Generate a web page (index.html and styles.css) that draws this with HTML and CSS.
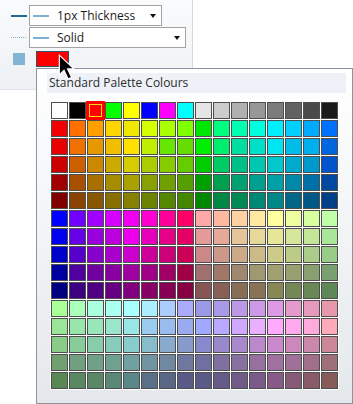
FILE: index.html
```html
<!DOCTYPE html>
<html lang="en">
<head>
    <meta charset="UTF-8">
    <title>Line Style Picker</title>
    <link rel="stylesheet" href="styles.css">
</head>
<body>
    <div class="style-panel">
        <!-- Thickness row -->
        <div class="style-row">
            <span class="line-icon thick"></span>
            <div class="combo combo-short">
                <span class="combo-line"></span>
                <span class="combo-text">1px Thickness</span>
                <span class="combo-arrow"></span>
            </div>
        </div>

        <!-- Dash style row -->
        <div class="style-row">
            <span class="line-icon dotted"></span>
            <div class="combo combo-long">
                <span class="combo-line"></span>
                <span class="combo-text">Solid</span>
                <span class="combo-arrow"></span>
            </div>
        </div>

        <!-- Colour row -->
        <div class="style-row colour-row">
            <span class="fill-icon"></span>
            <button class="colour-button"></button>
        </div>
    </div>

    <!-- Palette popup -->
    <div class="palette-popup">
        <div class="palette-header">Standard Palette Colours</div>
        <div class="palette-body">
            <div id="paletteGrid" class="palette-grid"></div>
        </div>
    </div>

    <svg class="cursor" width="19" height="28" viewBox="0 0 16 24">
        <path d="M1 1 L1 18 L5 14 L8.5 21.5 L11.5 20 L8 12.8 L13.5 12.8 Z" fill="#000" stroke="#fff" stroke-width="1" stroke-linejoin="miter"/>
    </svg>

    <script src="palette.js"></script>
</body>
</html>
```

FILE: styles.css
```css
body {
    margin: 0;
    background: #ffffff;
    font-family: 'Open Sans', 'Noto Sans', sans-serif;
    font-size: 12px;
    color: #1b1b1b;
}
.style-panel {
    width: 193px;
    height: 90px;
    box-sizing: border-box;
    padding: 5px 0 0 11px;
    background: linear-gradient(#fafbfc, #eef1f4);
    border-right: 1px solid #d3dae2;
    border-bottom: 1px solid #dfe4ea;
}
.style-row {
    display: flex;
    align-items: center;
    height: 21px;
    margin-bottom: 1px;
}
.line-icon {
    width: 16px;
    margin-right: 2px;
}
.line-icon.thick {
    height: 2px;
    background: #226a98;
}
.line-icon.dotted {
    height: 1px;
    background: repeating-linear-gradient(90deg, #7fb3d3 0 1px, transparent 1px 2px);
}
.combo {
    display: flex;
    align-items: center;
    height: 21px;
    box-sizing: border-box;
    border: 1px solid #a3a3a3;
    background: #ffffff;
    padding: 0 4px 0 3px;
}
.combo-short {
    width: 133px;
}
.combo-long {
    width: 157px;
}
.combo-line {
    width: 16px;
    height: 2px;
    background: #7db1d2;
    margin-right: 8px;
}
.combo-text {
    flex: 1;
    line-height: 19px;
}
.combo-arrow {
    width: 0;
    height: 0;
    border-left: 3px solid transparent;
    border-right: 3px solid transparent;
    border-top: 4px solid #111;
    margin-right: 1px;
}
.colour-row {
    margin-top: 3px;
    height: 16px;
}
.fill-icon {
    width: 12px;
    height: 12px;
    margin-left: 2px;
    background: #82b5d4;
}
.colour-button {
    width: 33px;
    height: 16px;
    margin-left: 11px;
    padding: 0;
    border: 1px solid #34516a;
    background: #ff0000;
}
.palette-popup {
    position: absolute;
    left: 36px;
    top: 68px;
    width: 317px;
    height: 336px;
    box-sizing: border-box;
    padding: 4px 6px 0 10px;
    border: 1px solid #8a949e;
    background: linear-gradient(#ffffff, #e4e8ec);
}
.palette-header {
    height: 20px;
    line-height: 20px;
    padding-left: 2px;
    background: #eef2f8;
    color: #2b2b2b;
}
.palette-body {
    display: inline-block;
    margin: 6px 0 0 3px;
    padding: 3px 1px 1px;
    background: #ffffff;
}
.palette-grid {
    display: grid;
    grid-template-columns: repeat(16, 17px);
    grid-auto-rows: 17px;
    gap: 1px;
}
.swatch {
    box-sizing: border-box;
    border: 1px solid #4e4e4e;
}
.swatch.selected {
    border-color: #ff0000;
    box-shadow: 0 0 0 1px #ff0000, inset 0 0 0 1px #ff0000, inset 0 0 0 2px #ffdd00;
}
.cursor {
    position: absolute;
    left: 58px;
    top: 54px;
}
```

FILE: palette.js
```js
// 16 x 16 standard palette, row by row
const rows = [
    "#ffffff #000000 #ff0000 #00ff00 #ffff00 #0000ff #ff00ff #00ffff #e5e5e5 #cccccc #b0b0b0 #979797 #7c7c7c #626262 #4a4a4a #1a1a1a",
    "#f00000 #ff7000 #ffa000 #ffd500 #f0e800 #d5ff00 #aaff00 #80ff00 #00e600 #00ff80 #00ffb0 #00ffdd #00eeff #00d0ff #00aaff #0070ff",
    "#e80000 #f07000 #e69800 #f0c000 #ffe000 #c0ee00 #66e600 #66dd00 #00ee00 #00ee70 #00dda0 #00e0c8 #00e5f0 #00bce6 #00b0ee #0066e0",
    "#cc0000 #cc6000 #cc8800 #ccaa00 #d4cc00 #aacc00 #88cc00 #66cc00 #00cc00 #00cc66 #00c088 #00c8b0 #00c8cc #00aacc #0099cc #0055cc",
    "#a00000 #a85000 #a87000 #a88c00 #aaa000 #88a000 #70a000 #55a000 #00a000 #00a050 #00a070 #00a090 #00a0a8 #0088a8 #0070a8 #0048a0",
    "#800000 #884400 #885800 #887000 #888000 #6a8400 #558800 #448800 #008800 #008844 #008855 #008877 #008888 #006688 #005888 #004088",
    "#0000ff #7000ff #a000ff #d500ff #f000f0 #ff00d0 #ff0099 #ff0066 #ffa8a8 #ffb8a0 #ffd0a0 #ffe8a0 #ffffa0 #eeffa0 #d8ffa0 #c0ffa8",
    "#0000ee #6600e6 #9900dd #bb00dd #ee00ee #e600bb #e60088 #e60066 #e69999 #e6a899 #e6c499 #e6d899 #e6e699 #d4e699 #c4e699 #aae699",
    "#0000cc #5500cc #8800cc #aa00cc #cc00cc #cc0099 #cc0077 #cc0055 #cc8888 #cc9988 #ccaa88 #ccbb88 #cccc88 #bbcc88 #aacc88 #99cc88",
    "#0000a0 #5000a0 #7000a0 #8800a0 #a000a0 #a00088 #a00066 #a00044 #a07070 #a07868 #a08870 #a09870 #a0a070 #98a070 #88a070 #78a070",
    "#000080 #3c0080 #500080 #660080 #800080 #880066 #880055 #880044 #885555 #886055 #886e55 #887455 #888855 #748855 #6a8855 #5e8855",
    "#aaff99 #aaffbb #aaffdd #aaffee #aaffff #aaeeff #aaccff #aaaaff #9999e6 #aa99e6 #bb99e6 #cc99e6 #dd99e6 #e699cc #e699bb #e699aa",
    "#99e699 #99e6aa #99e6bb #99e6cc #99e6e6 #99ccee #99bbee #99aaee #a0a8ff #b8a8ff #d0a8ff #e8b0ff #ffaaff #ffaaee #ffaadd #ffaabb",
    "#88cc88 #88cc99 #88ccaa #88ccbb #88cccc #88bbcc #88aacc #8899cc #8888cc #9988cc #aa88cc #bb88cc #cc88cc #cc88bb #cc88aa #cc8899",
    "#70a070 #70a080 #70a088 #70a090 #70a0a0 #7094a0 #7088a0 #7078a0 #7070a0 #8070a0 #8870a0 #9870a0 #a070a0 #a07098 #a07088 #a07078",
    "#5a8855 #5a8860 #5a8866 #5a8877 #5a8888 #5a7088 #5a6888 #5a5a88 #5a5a88 #665a88 #705a88 #7a5a88 #885a88 #885a77 #885a6a #885a5a"
];

const grid = document.getElementById("paletteGrid");
rows.forEach(function (row, r) {
    row.split(" ").forEach(function (colour, c) {
        const cell = document.createElement("span");
        cell.className = "swatch";
        if (r === 0 && c === 2) {
            cell.className += " selected";
        }
        cell.style.background = colour;
        grid.appendChild(cell);
    });
});
```
